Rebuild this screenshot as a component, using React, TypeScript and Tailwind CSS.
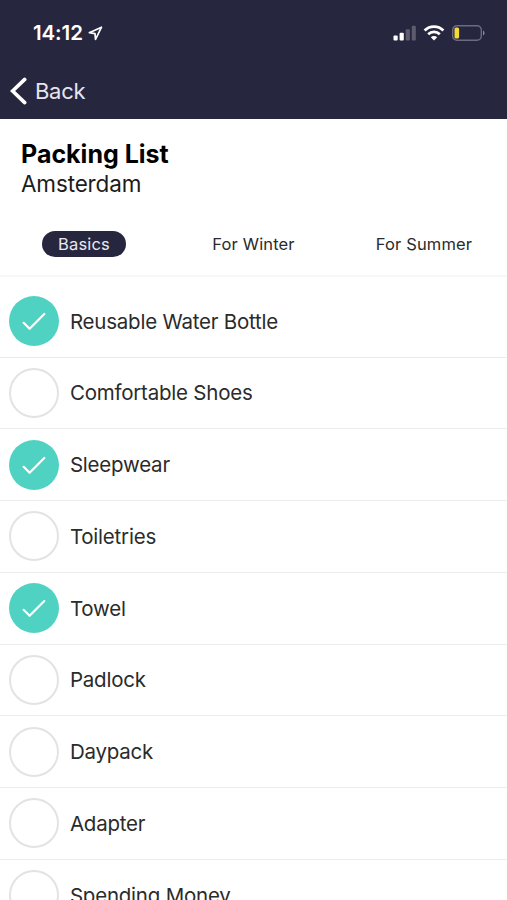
import React, { useState } from "react";

interface Item { name: string; packed: boolean }

const TABS = ["Basics", "For Winter", "For Summer"];

const ITEMS: Item[] = [
  { name: "Reusable Water Bottle", packed: true },
  { name: "Comfortable Shoes", packed: false },
  { name: "Sleepwear", packed: true },
  { name: "Toiletries", packed: false },
  { name: "Towel", packed: true },
  { name: "Padlock", packed: false },
  { name: "Daypack", packed: false },
  { name: "Adapter", packed: false },
  { name: "Spending Money", packed: false },
];

function StatusBar() {
  return (
    <div className="flex h-[66px] items-center justify-between pl-[33px] pr-[22px]">
      <div className="flex items-center gap-[5px]">
        <span className="text-[20.5px] font-semibold leading-6 tracking-[-0.1px]">14:12</span>
        <svg width="15" height="15" viewBox="0 0 15 15" fill="none" stroke="currentColor" strokeWidth="1.7" strokeLinejoin="round">
          <path d="M13.5 1.2 1.3 6.7l5.7.9.5 5.9z" />
        </svg>
      </div>
      <div className="flex items-center gap-[7px]">
        <svg width="23" height="16" viewBox="0 0 23 16" fill="currentColor">
          <rect x="0.5" y="10.5" width="4.2" height="5" rx="1" />
          <rect x="6.6" y="7.7" width="4.2" height="7.8" rx="1" />
          <rect x="12.7" y="4.2" width="4.2" height="11.3" rx="1" opacity=".25" />
          <rect x="18.8" y="0.7" width="4" height="14.8" rx="1" opacity=".25" />
        </svg>
        <svg width="22" height="16" viewBox="-.5 0 22 16" fill="none" stroke="currentColor" strokeWidth="2.8">
          <path d="M1.1 5.4a13.4 13.4 0 0 1 18.8 0" />
          <path d="M4.7 9.2a8.3 8.3 0 0 1 11.6 0" />
          <path d="M10.5 15.5 7.3 12.2a4.6 4.6 0 0 1 6.4 0z" fill="currentColor" stroke="none" />
        </svg>
        <svg width="33" height="16" viewBox="0 0 33 16" fill="none">
          <rect x=".7" y=".7" width="28.6" height="14.6" rx="4.2" stroke="#6d6b80" strokeWidth="1.4" />
          <rect x="2.5" y="2.5" width="4.6" height="11" rx="1.6" fill="#f5d936" />
          <path d="M31 5.5c2 .8 2 4.2 0 5z" fill="#8a889b" />
        </svg>
      </div>
    </div>
  );
}

function Row({ item, onToggle }: { item: Item; onToggle: () => void }) {
  return (
    <li className="h-[71.75px] border-b border-[#ececec]">
      <button onClick={onToggle} className="flex h-full w-full items-center gap-[10.5px] pl-[9.4px] text-left">
        {item.packed ? (
          <span className="flex size-[50px] shrink-0 items-center justify-center rounded-full bg-[#50d2c2] text-white">
            <svg width="24" height="20" viewBox="0 0 24 20" fill="none" stroke="currentColor" strokeWidth="2.2" strokeLinecap="round" strokeLinejoin="round">
              <path d="m1.6 11.8 6 6L22.3 3" />
            </svg>
          </span>
        ) : (
          <span className="size-[50px] shrink-0 rounded-full border-2 border-[#e3e3e3]" />
        )}
        <span className="pt-px text-[20.5px] leading-6 tracking-[-0.22px] text-[#2b2b2b]">{item.name}</span>
      </button>
    </li>
  );
}

export default function App() {
  const [tab, setTab] = useState("Basics");
  const [items, setItems] = useState(ITEMS);

  const toggle = (i: number) =>
    setItems(list => list.map((it, n) => (n === i ? { ...it, packed: !it.packed } : it)));

  return (
    <div className="h-[900px] w-[507px] overflow-hidden bg-white font-['Inter',sans-serif]">
      {/* Header */}
      <header className="h-[119px] bg-[#27263f] text-white">
        <StatusBar />
        <button className="flex h-[50px] items-center gap-2 pl-[10px]">
          <svg width="17" height="28" viewBox="0 0 17 28" fill="none" stroke="currentColor" strokeWidth="3.6" strokeLinecap="round">
            <path d="M14.7 2.4 2.6 14l12.1 11.6" />
          </svg>
          <span className="text-[22px] leading-7 tracking-[-0.3px] text-[#e6e5ee]">Back</span>
        </button>
      </header>

      {/* Title */}
      <div className="h-[93px] pl-[21px] pt-5">
        <h1 className="text-[25px] font-bold leading-[30px] text-black">Packing List</h1>
        <p className="text-[22.5px] leading-[29px] tracking-[-0.15px] text-[#1c1c1c]">Amsterdam</p>
      </div>

      {/* Tabs */}
      <nav className="grid h-[65px] grid-cols-[168px_171px_170px] items-center border-b-2 border-[#f7f7f7]">
        {TABS.map(t => (
          <button key={t} onClick={() => setTab(t)}
            className={`mx-auto flex h-[26px] items-center rounded-full px-4 pt-px text-[16.5px] tracking-[0.15px] ${
              tab === t ? "bg-[#27263f] text-[#e9e8f0]" : "text-[#2b2b2b]"
            }`}>
            {t}
          </button>
        ))}
      </nav>

      {/* Items */}
      <ul className="pt-[8.75px]">
        {items.map((item, i) => <Row key={item.name} item={item} onToggle={() => toggle(i)} />)}
      </ul>
    </div>
  );
}
